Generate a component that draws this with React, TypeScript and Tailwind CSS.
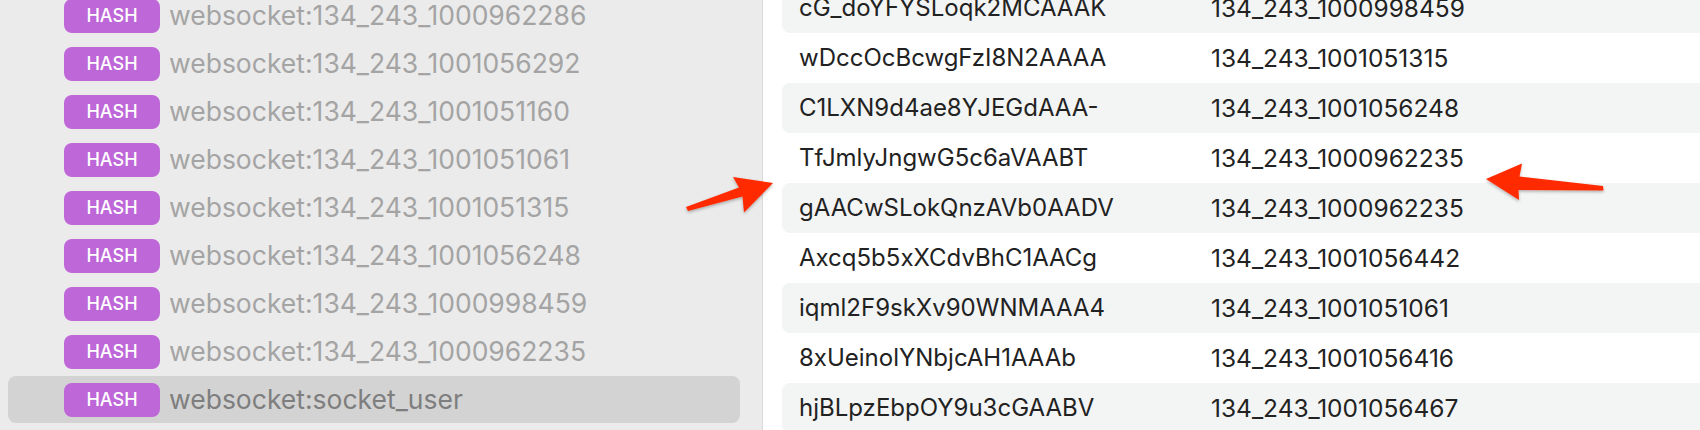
const keys = [
  "websocket:134_243_1000962286",
  "websocket:134_243_1001056292",
  "websocket:134_243_1001051160",
  "websocket:134_243_1001051061",
  "websocket:134_243_1001051315",
  "websocket:134_243_1001056248",
  "websocket:134_243_1000998459",
  "websocket:134_243_1000962235",
  "websocket:socket_user",
];

const fields: [string, string][] = [
  ["cG_doYFYSLoqk2MCAAAK", "134_243_1000998459"],
  ["wDccOcBcwgFzI8N2AAAA", "134_243_1001051315"],
  ["C1LXN9d4ae8YJEGdAAA-", "134_243_1001056248"],
  ["TfJmlyJngwG5c6aVAABT", "134_243_1000962235"],
  ["gAACwSLokQnzAVb0AADV", "134_243_1000962235"],
  ["Axcq5b5xXCdvBhC1AACg", "134_243_1001056442"],
  ["iqml2F9skXv90WNMAAA4", "134_243_1001051061"],
  ["8xUeinolYNbjcAH1AAAb", "134_243_1001056416"],
  ["hjBLpzEbpOY9u3cGAABV", "134_243_1001056467"],
];

const KeyRow = ({ name, selected }: { name: string; selected: boolean }) => (
  <div
    className={`flex items-center h-[47px] mb-px pl-[56px] rounded-lg ${
      selected ? "bg-[#d3d3d3] text-[#7e7e7e]" : "text-[#a4a4a4]"
    }`}
  >
    <span className="flex items-center justify-center w-[96px] h-[34px] rounded-lg bg-[#be67d8] text-white text-[18px] font-medium">
      HASH
    </span>
    <span className="ml-[9px] text-[26.5px] whitespace-nowrap">{name}</span>
  </div>
);

const Arrows = () => (
  <svg className="absolute inset-0 pointer-events-none" width="1700" height="430">
    <defs>
      <filter id="sh" x="-20%" y="-50%" width="140%" height="200%">
        <feDropShadow dx="0" dy="1.5" stdDeviation="1.5" floodColor="#000" floodOpacity="0.3" />
      </filter>
    </defs>
    <polygon
      filter="url(#sh)"
      fill="#ff2c06"
      points="686,207 739,187.5 733,177 773,183 744,212.5 742.5,196.5 688,211"
    />
    <polygon
      filter="url(#sh)"
      fill="#ff2c06"
      points="1486,179 1522,163.5 1519.5,176.5 1603,186 1603.5,190.5 1518.5,190 1519,200"
    />
  </svg>
);

export default function App() {
  return (
    <div className="relative flex w-[1700px] h-[430px] overflow-hidden bg-white font-['Inter','Liberation_Sans',sans-serif]">
      <div className="w-[763px] shrink-0 bg-[#ebebeb] border-r border-[#dadada] pl-[8px] pr-[22px]">
        <div className="-mt-[8px] flex flex-col">
          {keys.map((k, i) => (
            <KeyRow key={k} name={k} selected={i === keys.length - 1} />
          ))}
        </div>
      </div>
      <div className="flex-1 pl-[19px]">
        <div className="-mt-[17px] flex flex-col">
          {fields.map(([field, value], i) => (
            <div
              key={field}
              className={`flex items-center h-[50px] pl-[17px] text-[#222222] rounded-l-lg ${
                i % 2 === 0 ? "bg-[#f3f4f4]" : ""
              }`}
            >
              <span className="w-[412px] text-[24px] whitespace-nowrap">{field}</span>
              <span className="text-[24.5px] whitespace-nowrap">{value}</span>
            </div>
          ))}
        </div>
      </div>
      <Arrows />
    </div>
  );
}
